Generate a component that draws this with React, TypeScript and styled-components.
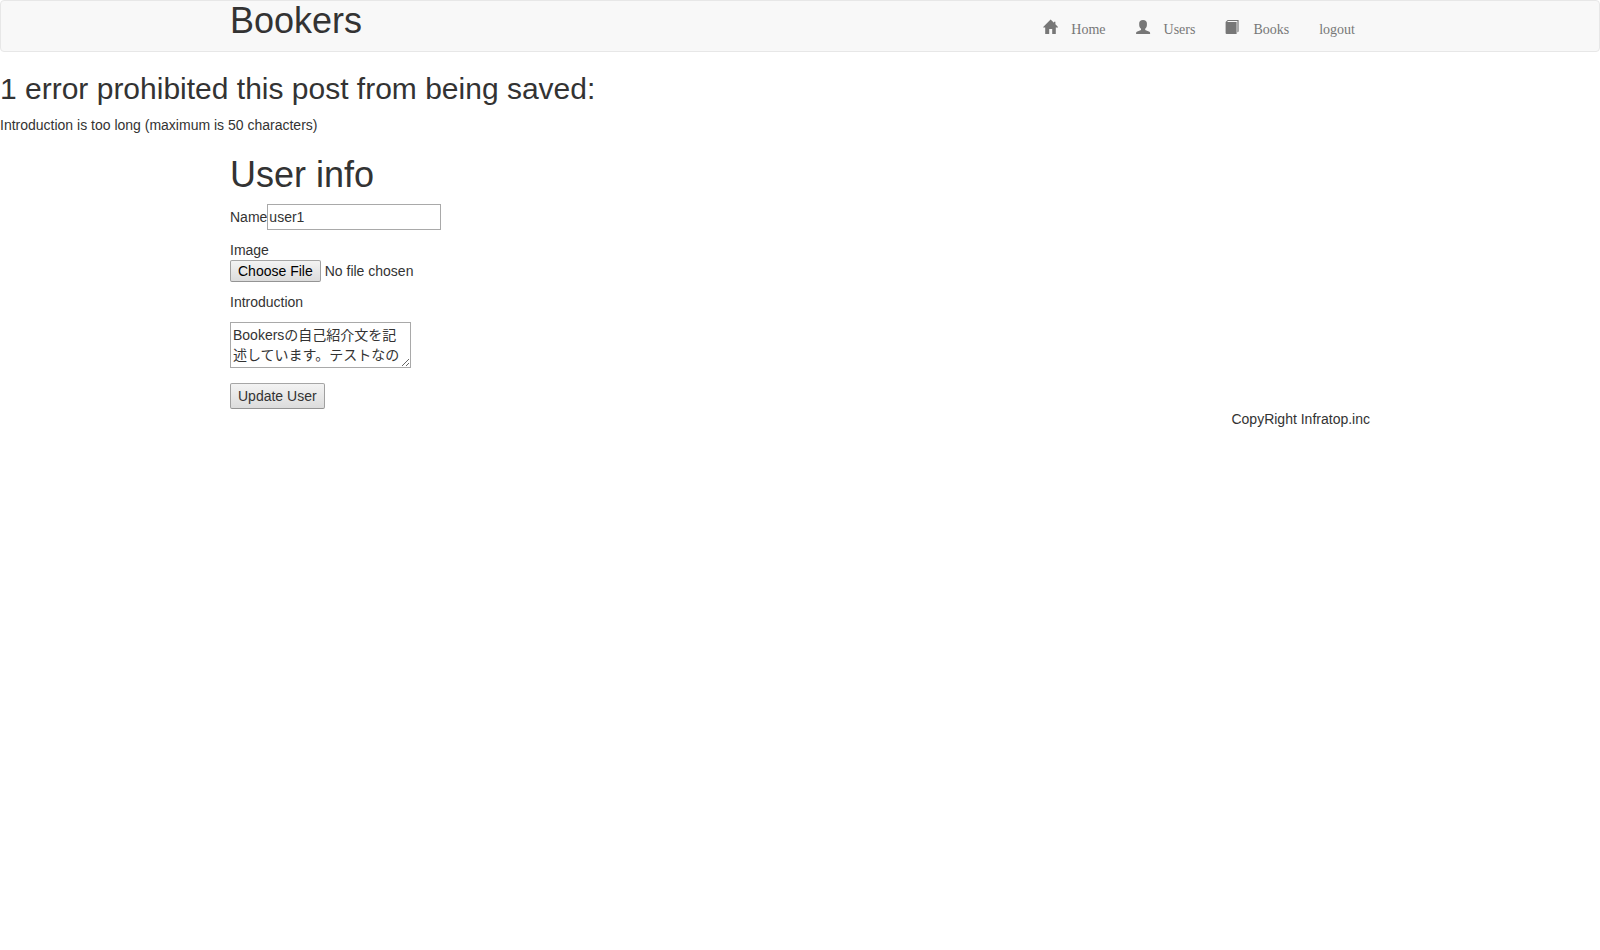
import React from "react";
import styled, { createGlobalStyle } from "styled-components";

const GlobalStyle = createGlobalStyle`
  *, *::before, *::after { box-sizing: border-box; }
  body {
    margin: 0;
    background: #fff;
    color: #333;
    font: 14px/20px "Liberation Sans", "Noto Sans CJK JP", sans-serif;
  }
`;

const Navbar = styled.nav`
  height: 52px;
  margin-bottom: 20px;
  border: 1px solid #e7e7e7;
  border-radius: 4px;
  background: #f8f8f8;
`;

const Container = styled.div`
  width: 1170px;
  margin: 0 auto;
  padding: 0 15px;
`;

const NavContent = styled(Container)`
  display: flex;
  justify-content: space-between;
`;

const Title = styled.h1`
  margin: 0;
  font-size: 36px;
  font-weight: 500;
  line-height: 39px;
`;

const PageTitle = styled(Title)`
  margin: 20px 0 10px;
`;

const NavList = styled.ul`
  display: flex;
  margin: 0;
  padding: 0;
  list-style: none;
`;

const NavLink = styled.a`
  display: flex;
  gap: 14px;
  height: 50px;
  padding: 18px 15px 0;
  color: #777;
  font-family: "Liberation Serif", serif;
  line-height: 22px;
  text-decoration: none;
`;

const Icon = styled.svg`
  display: block;
  width: 14px;
  height: 16px;
  fill: currentColor;
  overflow: visible;
`;

const ErrorTitle = styled.h2`
  margin: 0 0 10px;
  font-size: 30px;
  font-weight: 500;
  line-height: 33px;
`;

const ErrorList = styled.ul`
  margin: 0;
  padding: 0;
  list-style: none;
`;

const Field = styled.div`
  margin-bottom: 10px;
`;

const InlineField = styled(Field)`
  display: flex;
  align-items: center;
`;

const TextInput = styled.input`
  width: 174px;
  height: 26px;
  padding: 1px;
  border: 1px solid #a9a9a9;
  border-radius: 0;
  background: #fff;
  color: inherit;
  font: inherit;
  outline: none;
`;

const TextArea = styled.textarea`
  display: block;
  width: 181px;
  height: 46px;
  margin-bottom: 15px;
  padding: 2px;
  border: 1px solid #a9a9a9;
  border-radius: 0;
  background: #fff;
  color: inherit;
  font: inherit;
  overflow: hidden;
  outline: none;
`;

const Button = styled.button<{ $compact?: boolean }>`
  display: block;
  height: ${(p) => (p.$compact ? 22 : 26)}px;
  padding: 0 7px;
  border: 1px solid;
  border-color: #a6a6a6 #a0a0a0 #949494;
  border-radius: 2px;
  background: linear-gradient(#f3f3f3, #dcdcdc);
  color: ${(p) => (p.$compact ? "#000" : "#333")};
  font: inherit;
  line-height: ${(p) => (p.$compact ? 20 : 24)}px;
`;

const FilePicker = styled.div`
  display: flex;
  gap: 4px;
  height: 22px;
  line-height: 22px;
`;

const Footer = styled.footer`
  text-align: right;
`;

const HomeIcon = () => (
  <Icon viewBox="0 0 14 16">
    <path d="M7.6 .5 11 3.8V2.8H12.4V5.3L15 8V8.4H12.8V15H9.2V10H6.2V15H2.2V8.4H.2V8Z" />
  </Icon>
);

const UserIcon = () => (
  <Icon viewBox="0 0 14 16">
    <path d="M7 1C9.6 1 10.9 2.3 10.9 4.3V6C10.9 7.8 10.1 9 9.2 9.8V11L13.4 12.7Q14.1 13.1 14.1 14V15H.1V14Q.1 13.1 .8 12.7L5 11V9.8C4 9 3.2 7.8 3.2 6V4.3C3.2 2.3 4.5 1 7 1Z" />
  </Icon>
);

const BookIcon = () => (
  <Icon viewBox="0 0 14 16">
    <path d="M2.6 1H13.6V12.6L12.4 13.4V2.1H3.1L2 3.1H11.6V15H1.6Q.6 15 .6 14V3Z" />
  </Icon>
);

const links = [
  { label: "Home", icon: <HomeIcon /> },
  { label: "Users", icon: <UserIcon /> },
  { label: "Books", icon: <BookIcon /> },
  { label: "logout", icon: null },
];

export default function App() {
  return (
    <>
      <GlobalStyle />
      <Navbar>
        <NavContent>
          <Title>Bookers</Title>
          <NavList>
            {links.map(({ label, icon }) => (
              <li key={label}>
                <NavLink>
                  {icon}
                  <span>{label}</span>
                </NavLink>
              </li>
            ))}
          </NavList>
        </NavContent>
      </Navbar>
      <ErrorTitle>1 error prohibited this post from being saved:</ErrorTitle>
      <ErrorList>
        <li>Introduction is too long (maximum is 50 characters)</li>
      </ErrorList>
      <Container>
        <PageTitle>User info</PageTitle>
        <InlineField>
          <label htmlFor="name">Name</label>
          <TextInput id="name" defaultValue="user1" />
        </InlineField>
        <Field>
          <div>Image</div>
          <FilePicker>
            <Button type="button" $compact>Choose File</Button>
            <span>No file chosen</span>
          </FilePicker>
        </Field>
        <Field>
          <label htmlFor="introduction">Introduction</label>
        </Field>
        <TextArea
          id="introduction"
          spellCheck={false}
          defaultValue="Bookersの自己紹介文を記述しています。テストなの"
        />
        <Button type="button">Update User</Button>
        <Footer>CopyRight Infratop.inc</Footer>
      </Container>
    </>
  );
}
